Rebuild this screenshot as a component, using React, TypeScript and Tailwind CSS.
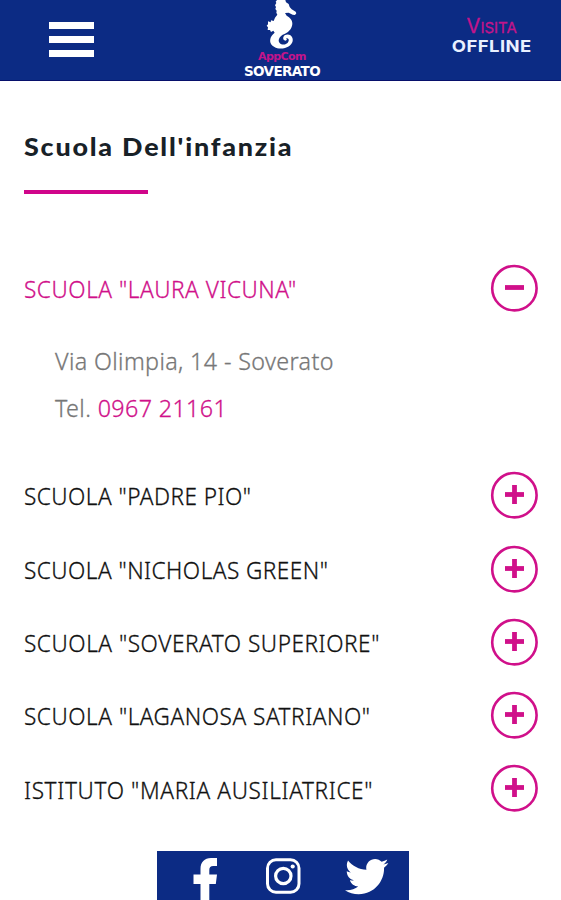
import { useState } from 'react';

const schools = [
  { name: 'SCUOLA "LAURA VICUNA"', fit: 'tracking-[0.6px]' },
  { name: 'SCUOLA "PADRE PIO"', fit: 'tracking-[0.52px]' },
  { name: 'SCUOLA "NICHOLAS GREEN"', fit: 'tracking-[0.52px]' },
  { name: 'SCUOLA "SOVERATO SUPERIORE"', fit: 'tracking-[0.6px]' },
  { name: 'SCUOLA "LAGANOSA SATRIANO"', fit: 'tracking-[0.59px]' },
  { name: 'ISTITUTO "MARIA AUSILIATRICE"', fit: 'tracking-[0.71px]' },
];

function Seahorse() {
  return (
    <svg className="h-[50px] w-[32px]" viewBox="106 0 96 150" fill="#fff">
      <path d="M139 0 135 5 137 9 133 16 136 21 134 27 138 32 137 38 140 44 133 53 129 63 121 61 120 67 112 64 112 73 108 77 112 82 111 90 118 90 121 96 128 92 132 98C120 107 116 119 120 130C126 143 144 149 163 144C179 139 188 128 186 116C184 105 171 100 162 106C155 112 157 121 164 122C169 122 170 117 166 115C172 113 177 118 173 125C169 134 154 137 147 129C141 121 145 112 156 104C172 99 184 87 185 72C186 60 178 53 168 47L163 39 174 38 186 44 193 45 197 40 195 35 183 28 177 21 174 12 166 7 164 0Z" />
    </svg>
  );
}

function ToggleIcon({ open }: { open: boolean }) {
  return (
    <svg className="size-[48px] shrink-0" viewBox="0 0 48 48" fill="none" stroke="#d0108a">
      <circle cx="24.4" cy="24.2" r="22.2" strokeWidth="2.6" />
      <path d="M15 23.5H34" strokeWidth="4.8" />
      {!open && <path d="M24.5 14V33" strokeWidth="4.8" />}
    </svg>
  );
}

export default function App() {
  const [active, setActive] = useState(0);
  return (
    <div className="flex h-[900px] w-[561px] flex-col overflow-hidden bg-white font-['Noto_Sans','Open_Sans',sans-serif]">
      <header className="grid h-[81px] shrink-0 grid-cols-[1fr_104px_1fr] border-b border-[#07106b] bg-[#0c2b84]">
        <button className="ml-[49px] mt-[22px] flex h-[35px] w-[45px] flex-col justify-between" aria-label="Menu">
          <span className="h-[7px] w-full bg-white" />
          <span className="h-[7px] w-full bg-white" />
          <span className="h-[7px] w-full bg-white" />
        </button>
        <div className="flex flex-col items-center pl-[3px]">
          <Seahorse />
          <span className="h-[13px] font-['DejaVu_Sans',sans-serif] text-[11px] font-bold leading-[13px] tracking-[-0.6px] text-[#c3148b]">AppCom</span>
          <span className="h-[15px] font-['DejaVu_Sans',sans-serif] text-[13.5px] font-bold leading-[16px] tracking-[-0.6px] text-white">SOVERATO</span>
        </div>
        <div className="flex flex-col items-center pl-[90px] pt-[15px] font-['Inter',sans-serif]">
          <span className="h-[21px] text-[20px] leading-[22px] text-[#c3148b] [-webkit-text-stroke:0.3px]">V<span className="text-[15px]">ISITA</span></span>
          <span className="scale-x-[1.12] text-[16.5px] font-bold leading-[20px] tracking-[0.4px] text-[#e9f0ff]">OFFLINE</span>
        </div>
      </header>

      <main className="flex h-[770px] shrink-0 flex-col pl-6 pr-[23px]">
        <h1 className="mt-[50px] h-8 origin-left scale-x-[1.12] whitespace-nowrap font-['Lato',sans-serif] text-[24px] font-black leading-8 tracking-[1.6px] text-[#182127]">Scuola Dell'infanzia</h1>
        <div className="mt-[27px] h-1 w-[124px] shrink-0 bg-[#d0058a]" />
        <div className="mt-[70px] flex flex-col gap-[25.3px]">
          {schools.map((school, i) => (
            <section key={school.name}>
              <button
                onClick={() => setActive(active === i ? -1 : i)}
                className={`flex h-12 w-full items-center justify-between text-left text-[24.5px] font-light [-webkit-text-stroke:0.3px] ${active === i ? 'text-[#d0108a]' : 'text-[#111]'}`}
              >
                <span className={`origin-left scale-x-[0.92] whitespace-nowrap pt-[3px] ${school.fit}`}>{school.name}</span>
                <ToggleIcon open={active === i} />
              </button>
              {active === i && (
                <div className="mb-[36px] h-[98px] pl-[31px] pt-[25px] text-[24.5px] font-light leading-[47px] tracking-[0.4px] text-[#777] [-webkit-text-stroke:0.3px]">
                  <p className="origin-left scale-x-[0.95] whitespace-nowrap">Via Olimpia, 14 - Soverato</p>
                  <p className="origin-left scale-x-[0.95] whitespace-nowrap">Tel. <span className="text-[#d0108a]">0967 21161</span></p>
                </div>
              )}
            </section>
          ))}
        </div>
      </main>

      <footer className="ml-[157px] flex h-[49px] w-[252px] shrink-0 bg-[#0c2b84]">
        <svg className="h-full w-full" viewBox="0 0 252 49" fill="#fff">
          <path d="M43.5 49V33H36.5V23.5H43.5V18C43.5 11 47.5 7 54 7H60V15H56.2C53.5 15 52.3 16.5 52.3 19V23.5H60L58.8 33H52.3V49Z" />
          <rect x="110.5" y="8.8" width="31.5" height="32.5" rx="8.5" fill="none" stroke="#fff" strokeWidth="3" />
          <circle cx="126.3" cy="25" r="7.7" fill="none" stroke="#fff" strokeWidth="3.2" />
          <circle cx="135.7" cy="15.5" r="2.1" />
          <svg x="188" y="3.8" width="43.5" height="43.5" viewBox="0 0 512 512">
            <path d="M459.4 151.7c.3 4.5.3 9.1.3 13.6 0 138.7-105.6 298.6-298.6 298.6-59.5 0-114.7-17.2-161.1-47.1 8.4 1 16.6 1.3 25.3 1.3 49.1 0 94.2-16.6 130.3-44.8-46.1-1-84.8-31.2-98.1-72.8 6.5 1 13 1.6 19.8 1.6 9.4 0 18.8-1.3 27.6-3.6-48.1-9.7-84.1-52-84.1-103v-1.3c14 7.8 30.2 12.7 47.4 13.3-28.3-18.8-46.8-51-46.8-87.4 0-19.5 5.2-37.4 14.3-53 51.7 63.7 129.3 105.3 216.4 109.8-1.6-7.8-2.6-15.9-2.6-24 0-57.8 46.8-104.9 104.9-104.9 30.2 0 57.5 12.7 76.7 33.1 23.7-4.5 46.5-13.3 66.6-25.3-7.8 24.4-24.4 44.8-46.1 57.8 21.1-2.3 41.6-8.1 60.4-16.2-14.3 20.8-32.2 39.3-52.6 54.3z" />
          </svg>
        </svg>
      </footer>
    </div>
  );
}
